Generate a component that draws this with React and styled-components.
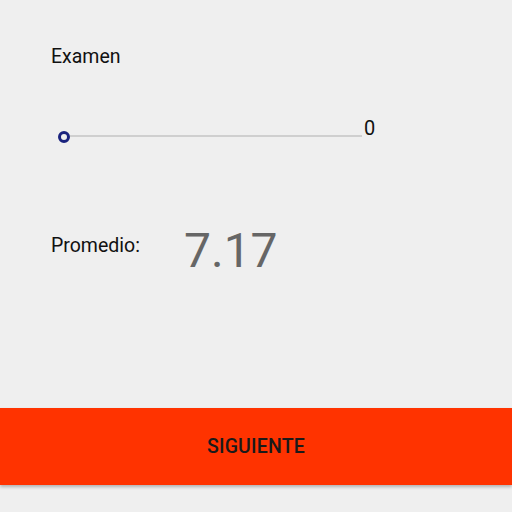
import React from 'react';
import styled, { createGlobalStyle } from 'styled-components';

const GlobalStyle = createGlobalStyle`
  html, body {
    margin: 0;
    padding: 0;
    background: #efefef;
    font-family: Roboto, "Noto Sans", sans-serif;
  }
`;

const Screen = styled.div`
  width: 512px;
  height: 512px;
  display: flex;
  flex-direction: column;
  background: #efefef;
  overflow: hidden;
`;

const Content = styled.div`
  flex: 1;
  display: flex;
  flex-direction: column;
  padding: 45px 0 0 51px;
`;

const Label = styled.div`
  font-size: 19.5px;
  color: #111;
  line-height: 24px;
`;

const SliderRow = styled.div`
  display: flex;
  align-items: flex-end;
  margin-top: 47px;
`;

const Track = styled.div`
  position: relative;
  width: 292px;
  height: 2px;
  background: #cfcfcf;
  margin: 0 0 12px 19px;
`;

const Thumb = styled.div`
  position: absolute;
  left: -12px;
  top: -4px;
  width: 6px;
  height: 6px;
  border: 3px solid #1a237e;
  border-radius: 50%;
  background: #efefef;
`;

const SliderValue = styled.div`
  font-size: 20px;
  color: #111;
  line-height: 24px;
  margin-bottom: 9px;
  padding-left: 2px;
`;

const AverageRow = styled.div`
  display: flex;
  align-items: flex-start;
  margin-top: 85px;
`;

const AverageLabel = styled(Label)`
  width: 133px;
`;

const AverageValue = styled.div`
  font-size: 48px;
  color: #666;
  line-height: 60px;
  margin-top: -13px;
`;

const NextButton = styled.button`
  display: flex;
  align-items: center;
  justify-content: center;
  width: 100%;
  height: 77px;
  margin-bottom: 27px;
  border: none;
  background: #ff3300;
  color: #1a1a1a;
  font-family: Roboto, "Noto Sans", sans-serif;
  font-size: 19.5px;
  font-weight: 500;
  letter-spacing: 0.2px;
  box-shadow: 0 2px 3px rgba(0, 0, 0, 0.25);
`;

export default function App() {
  return (
    <>
      <GlobalStyle />
      <Screen>
        <Content>
          <Label>Examen</Label>
          <SliderRow>
            <Track>
              <Thumb />
            </Track>
            <SliderValue>0</SliderValue>
          </SliderRow>
          <AverageRow>
            <AverageLabel>Promedio:</AverageLabel>
            <AverageValue>7.17</AverageValue>
          </AverageRow>
        </Content>
        <NextButton>SIGUIENTE</NextButton>
      </Screen>
    </>
  );
}
